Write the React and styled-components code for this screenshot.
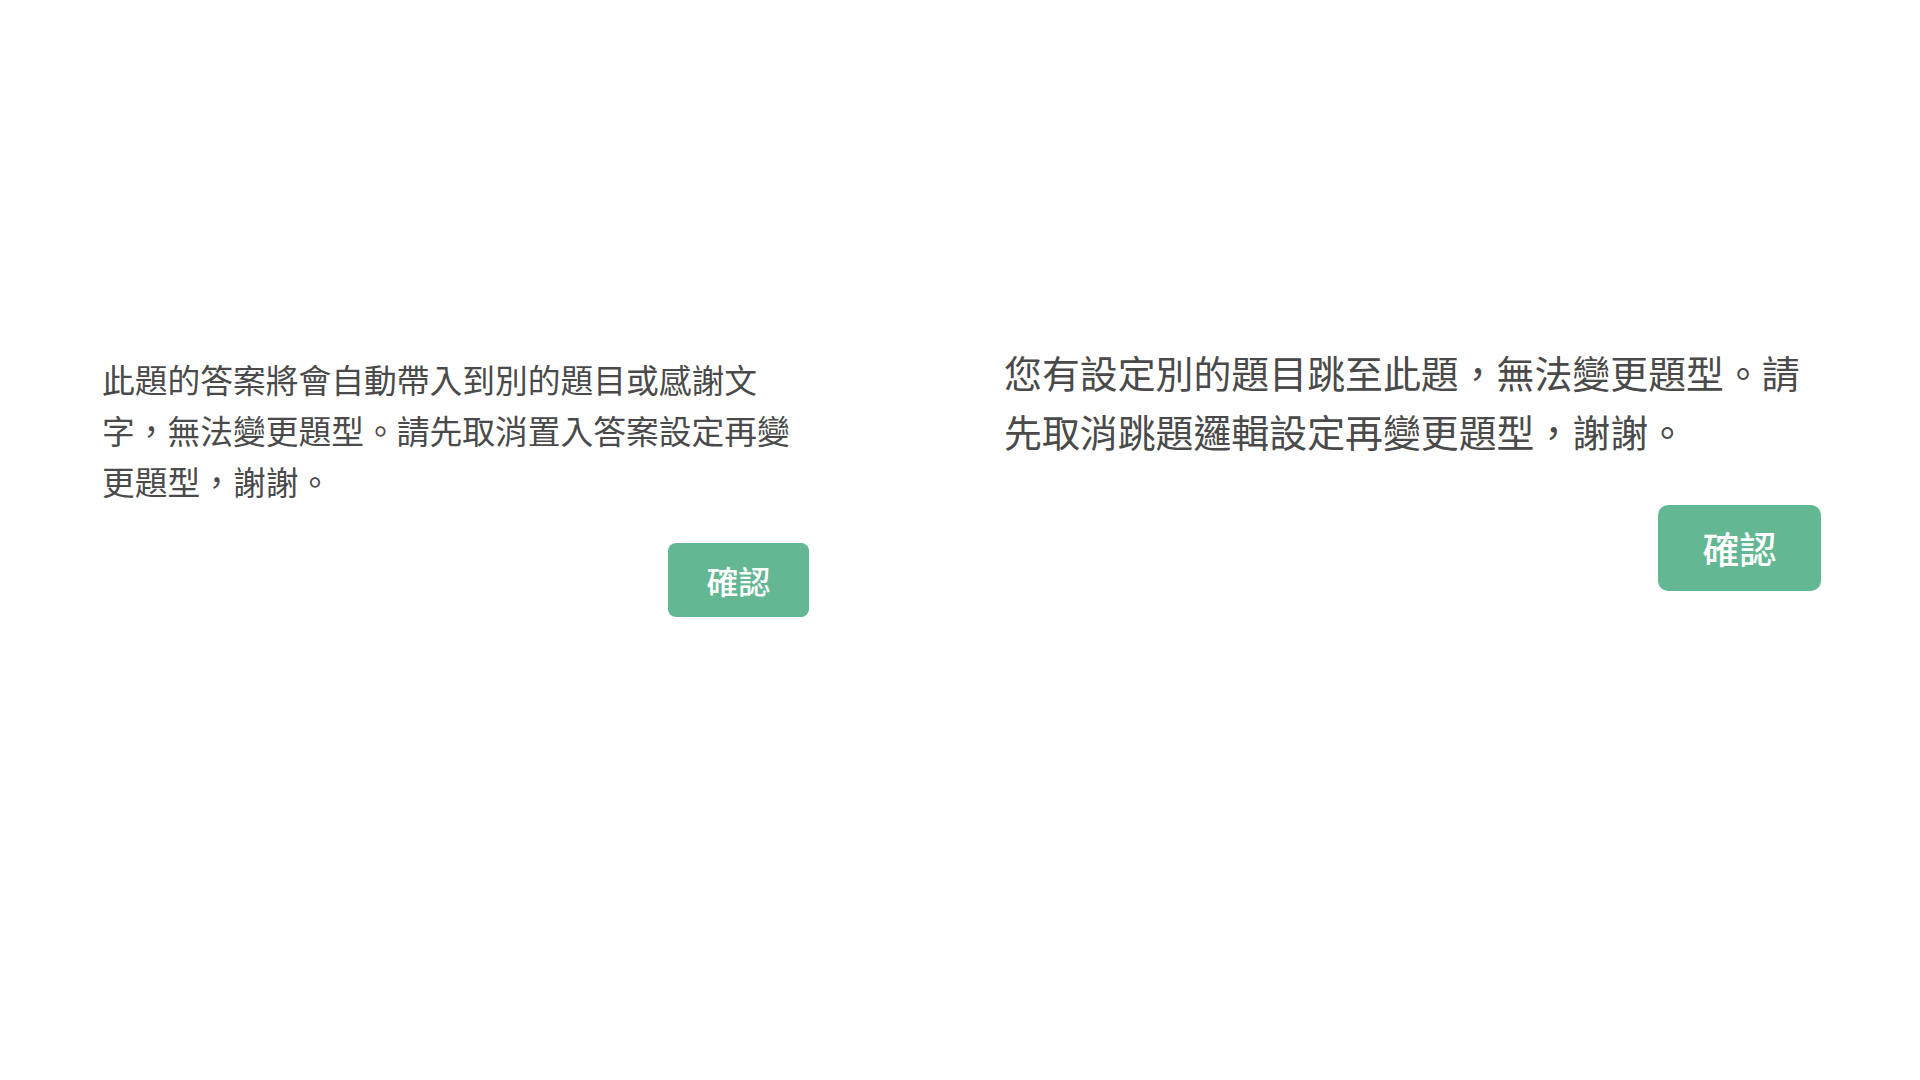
import React from "react";
import styled, { createGlobalStyle } from "styled-components";

const GlobalStyle = createGlobalStyle`
  html, body {
    margin: 0;
    padding: 0;
    background: #ffffff;
  }
  body {
    font-family: "Noto Sans CJK TC", "Noto Sans", sans-serif;
  }
`;

const Page = styled.div`
  width: 1920px;
  height: 1080px;
  display: flex;
  align-items: flex-start;
  padding-left: 102px;
  box-sizing: border-box;
`;

const Dialog = styled.div`
  width: ${(props) => props.width}px;
  margin-top: ${(props) => props.top}px;
  margin-left: ${(props) => props.left || 0}px;
  display: flex;
  flex-direction: column;
`;

const Message = styled.p`
  margin: 0;
  font-size: ${(props) => props.size}px;
  line-height: ${(props) => props.lineHeight}px;
  color: #4a4a4a;
  font-weight: 400;
  line-break: strict;
`;

const Footer = styled.div`
  display: flex;
  justify-content: flex-end;
  margin-top: ${(props) => props.gap}px;
`;

const ConfirmButton = styled.button`
  width: ${(props) => props.width}px;
  height: ${(props) => props.height}px;
  border: none;
  border-radius: ${(props) => props.radius}px;
  background: #63b793;
  color: #ffffff;
  font-family: "Noto Sans CJK TC", "Noto Sans", sans-serif;
  font-size: ${(props) => props.size}px;
  font-weight: 500;
  padding: 0;
  cursor: pointer;
`;

export default function App() {
  return (
    <>
      <GlobalStyle />
      <Page>
        <Dialog width={707} top={353}>
          <Message size={32.75} lineHeight={51}>
            此題的答案將會自動帶入到別的題目或感謝文字，無法變更題型。請先取消置入答案設定再變更題型，謝謝。
          </Message>
          <Footer gap={37}>
            <ConfirmButton width={141} height={74} radius={8} size={32}>
              確認
            </ConfirmButton>
          </Footer>
        </Dialog>
        <Dialog width={817} top={342} left={195}>
          <Message size={37.9} lineHeight={59}>
            您有設定別的題目跳至此題，無法變更題型。請先取消跳題邏輯設定再變更題型，謝謝。
          </Message>
          <Footer gap={45}>
            <ConfirmButton width={163} height={86} radius={10} size={37}>
              確認
            </ConfirmButton>
          </Footer>
        </Dialog>
      </Page>
    </>
  );
}
